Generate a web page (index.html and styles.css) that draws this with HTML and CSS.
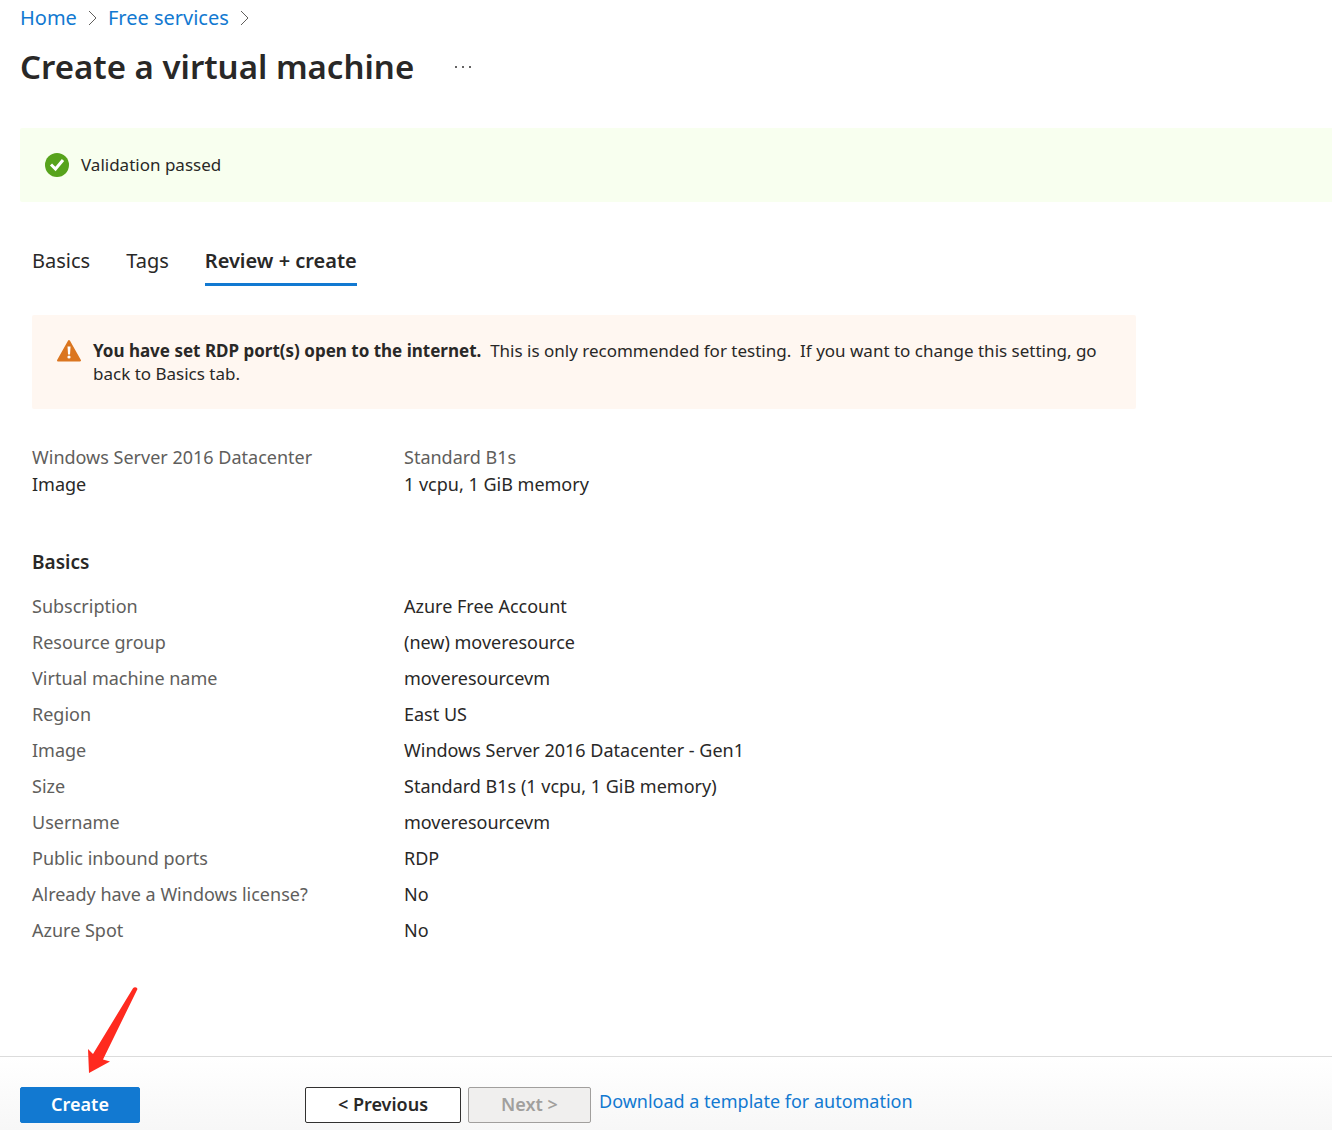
FILE: index.html
```html
<!DOCTYPE html>
<html lang="en">
<head>
<meta charset="utf-8">
<title>Create a virtual machine</title>
<link rel="stylesheet" href="styles.css">
</head>
<body>
<header class="top">
  <nav class="crumbs" aria-label="Breadcrumb">
    <a href="#">Home</a>
    <svg class="chevron" viewBox="0 0 9 16"><path d="M1 1l7 7-7 7"/></svg>
    <a href="#">Free services</a>
    <svg class="chevron" viewBox="0 0 9 16"><path d="M1 1l7 7-7 7"/></svg>
  </nav>
  <div class="heading">
    <h1>Create a virtual machine</h1>
    <button class="more" type="button" aria-label="More">
      <svg viewBox="0 0 18 4"><circle cx="2" cy="2" r="1"/><circle cx="9" cy="2" r="1"/><circle cx="16" cy="2" r="1"/></svg>
    </button>
  </div>
</header>
<div class="validation" role="status">
  <svg class="status-icon" viewBox="0 0 24 24"><circle cx="12" cy="12" r="12" fill="#57a31c"/><path d="M6 11.500l4.500 4.500 7.500-9" fill="none" stroke="#fff" stroke-width="3"/></svg>
  <span>Validation passed</span>
</div>
<main class="content">
  <nav class="tabs">
    <button class="tab" type="button">Basics</button>
    <button class="tab" type="button">Tags</button>
    <button class="tab active" type="button">Review + create</button>
  </nav>
  <div class="warning" role="alert">
    <svg class="status-icon" viewBox="0 0 24 22"><path d="M12 1L23 20.500H1z" fill="#db7620" stroke="#db7620" stroke-width="2" stroke-linejoin="round"/><path d="M10.500 6.500h3l-.5 8h-2z" fill="#fff"/><circle cx="12" cy="17" r="1.600" fill="#fff"/></svg>
    <p><strong>You have set RDP port(s) open to the internet.</strong>&nbsp; This is only recommended for testing.&nbsp; If you want to change this setting, go back to Basics tab.</p>
  </div>
  <div class="summary">
    <div><span class="label">Windows Server 2016 Datacenter</span><span>Image</span></div>
    <div><span class="label">Standard B1s</span><span>1 vcpu, 1 GiB memory</span></div>
  </div>
  <h2>Basics</h2>
  <table class="details">
    <tr><th scope="row">Subscription</th><td>Azure Free Account</td></tr>
    <tr><th scope="row">Resource group</th><td>(new) moveresource</td></tr>
    <tr><th scope="row">Virtual machine name</th><td>moveresourcevm</td></tr>
    <tr><th scope="row">Region</th><td>East US</td></tr>
    <tr><th scope="row">Image</th><td>Windows Server 2016 Datacenter - Gen1</td></tr>
    <tr><th scope="row">Size</th><td>Standard B1s (1 vcpu, 1 GiB memory)</td></tr>
    <tr><th scope="row">Username</th><td>moveresourcevm</td></tr>
    <tr><th scope="row">Public inbound ports</th><td>RDP</td></tr>
    <tr><th scope="row">Already have a Windows license?</th><td>No</td></tr>
    <tr><th scope="row">Azure Spot</th><td>No</td></tr>
  </table>
</main>
<footer class="actions">
  <svg class="arrow" viewBox="0 0 52 88"><path d="M47 1.300Q48.500-.4 50.300.6T51 3L17 72.500l7 2L3 86 2 62l5 5z" fill="#ff2a1f"/></svg>
  <button class="btn primary" type="button">Create</button>
  <button class="btn previous" type="button">&lt; Previous</button>
  <button class="btn next" type="button" disabled>Next &gt;</button>
  <a class="template" href="#">Download a template for automation</a>
</footer>
</body>
</html>
```

FILE: styles.css
```css
* { box-sizing: border-box; }
body {
  margin: 0;
  min-height: 100vh;
  display: flex;
  flex-direction: column;
  background: #fff;
  color: #292827;
  font: 18px/24px "Noto Sans", "Open Sans", sans-serif;
}
h1, h2, p { margin: 0; }
button { font: inherit; color: inherit; }
a { color: #1279d1; text-decoration: none; }
.top { padding: 4px 20px 0; }
.crumbs { display: flex; align-items: center; gap: 11px; font-size: 20px; line-height: 28px; }
.chevron { width: 9px; height: 16px; fill: none; stroke: #605e5c; }
.heading { display: flex; align-items: center; gap: 40px; margin-top: 11px; padding-bottom: 1px; }
h1 { font-size: 33px; line-height: 48px; font-weight: 600; }
.more { padding: 0; border: 0; background: none; display: flex; }
.more svg { width: 18px; height: 4px; fill: #323130; }
.validation {
  display: flex;
  align-items: center;
  gap: 12px;
  margin: 36px 0 0 20px;
  padding: 25px;
  border-radius: 2px 0 0 2px;
  background: #f8ffef;
  font-size: 17px;
}
.status-icon { width: 24px; height: 24px; flex: none; }
.content { padding: 40px 32px 0; }
.tabs { display: flex; gap: 36px; }
.tab { padding: 4px 0 7px; border: 0; border-bottom: 3px solid transparent; background: none; font-size: 20px; line-height: 30px; }
.tab.active { border-color: #1279d1; font-weight: 600; }
.warning {
  display: flex;
  gap: 12px;
  max-width: 1104px;
  margin-top: 29px;
  padding: 24px 25px;
  border-radius: 2px;
  background: #fff7f1;
  font-size: 17px;
  line-height: 23px;
}
.summary { display: grid; grid-template-columns: 372px 1fr; margin-top: 35px; line-height: 27px; }
.summary span { display: block; }
.label { color: #605e5c; }
h2 { margin-top: 50px; font-size: 19px; line-height: 28px; font-weight: 600; }
.details { margin-top: 12px; border-collapse: collapse; line-height: 36px; }
.details th, .details td { padding: 0; text-align: left; font-weight: 400; }
.details th { width: 372px; color: #605e5c; }
.actions {
  position: relative;
  display: flex;
  align-items: center;
  margin-top: auto;
  padding: 30px 20px 7px;
  border-top: 1px solid #dcdcdc;
  background: linear-gradient(#fff, #f7f7f7);
}
.arrow { position: absolute; left: 86px; top: -70px; width: 52px; height: 88px; }
.btn { height: 36px; padding: 0 0 2px; border: 1px solid #323130; border-radius: 2px; background: #fff; font-weight: 600; }
.primary { width: 120px; border-color: #1279d1; background: #1279d1; color: #fff; }
.previous { width: 156px; margin-left: 165px; }
.next { width: 123px; margin-left: 7px; border-color: #a19f9d; background: #f0efee; color: #a19f9d; }
.template { margin-left: 8px; padding-bottom: 8px; }
```
